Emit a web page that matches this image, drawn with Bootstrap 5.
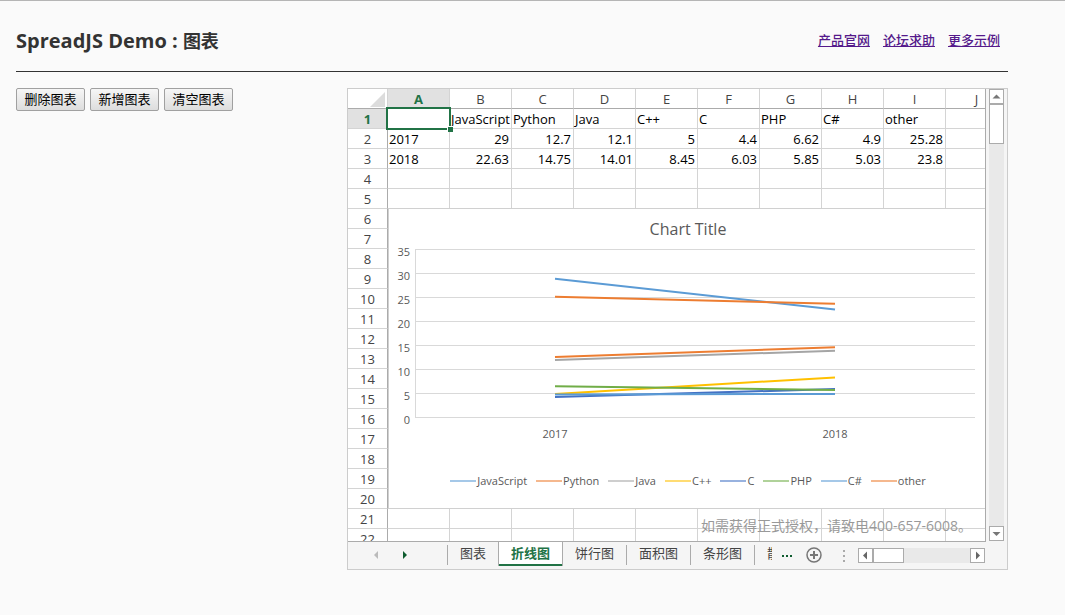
<!DOCTYPE html>
<html lang="zh-CN">
<head>
<meta charset="utf-8">
<meta name="viewport" content="width=device-width, initial-scale=1">
<title>SpreadJS Demo : 图表</title>
<link href="https://cdn.jsdelivr.net/npm/bootstrap@5.3.0/dist/css/bootstrap.min.css" rel="stylesheet">
<style>
  :root { --line: #d4d4d4; --edge: #ababab; --accent: #217346; }
  body { background: #fafafa; color: #333; border-top: 1px solid #b5b5b5; font: 13px/20px "Open Sans", "Noto Sans CJK SC", sans-serif; }
  .page { padding: 16px 57px 16px 16px; }
  .page-head { height: 55px; padding-bottom: 6px; border-bottom: 1px solid #333; }
  .page-title { font-size: 20px; line-height: 26px; font-weight: 700; }
  .page-title span { font-size: 18px; }
  .head-links { gap: 13px; padding-bottom: 2px; }
  .head-links a { color: #551a8b; font-weight: 500; }
  .actions { flex: 0 0 331px; gap: 5px; }
  .tool-btn { height: 23px; padding: 0 7px; font-size: 13px; line-height: 21px; width: 69px; white-space: nowrap; color: #000; border: 1px solid #a0a0a0; border-radius: 2px; background: linear-gradient(#f6f6f6, #ddd); }
  .spread { min-width: 0; border: 1px solid #ccc; background: #f5f5f5; }

  .sheet-view { height: 453px; min-width: 0; background: #fff; border-right: 1px solid var(--edge); border-bottom: 1px solid var(--edge); }
  .grid { table-layout: fixed; width: 660px; border-collapse: separate; border-spacing: 0; color: #000; }
  .grid th, .grid td { height: 20px; padding: 2px 2px 0 1px; line-height: 17px; white-space: nowrap; border-right: 1px solid var(--line); border-bottom: 1px solid var(--line); }
  .grid th { padding: 2px 0 0; font-weight: 400; text-align: center; color: #444; }
  .grid thead th { border-bottom-color: var(--edge); }
  .grid tbody th { border-right-color: var(--edge); }
  .grid th.picked { background: #e1e1e1; color: var(--accent); font-weight: 700; }
  .grid .corner-col { width: 40px; }
  .corner-mark { display: block; margin: 0 2px 0 auto; }
  .selection { top: -2px; left: -2px; width: 65px; height: 23px; border: 2px solid var(--accent); z-index: 1; }
  .selection::after { content: ""; position: absolute; right: -4px; bottom: -4px; width: 6px; height: 6px; background: var(--accent); border: solid #fff; border-width: 1px 0 0 1px; }

  .chart-box { left: 40px; top: 119px; width: 600px; height: 301px; background: #fff; border: 1px solid #d0d0d0; color: #595959; font-size: 11px; z-index: 2; }
  .chart-title { font-size: 16px; line-height: 20px; padding-top: 10px; }
  .chart-box text { fill: #595959; font-size: 11px; }
  .legend-row { gap: 9px; line-height: 16px; padding-top: 24px; }
  .legend-key { width: 26px; height: 2px; margin-right: 1px; opacity: .55; }
  .watermark { right: 13px; bottom: 5px; font-size: 14px; color: #999; z-index: 3; }

  .v-scroll { width: 15px; margin: 0 3px 1px; background: #e9e9e9; }
  .arrow-btn { width: 15px; height: 15px; background: #fff; border: 1px solid var(--edge); }
  .thumb { background: #fff; border: 1px solid var(--edge); }
  .v-scroll .thumb { height: 40px; }

  .tab-strip { height: 27px; color: #444; }
  .tab-nav { width: 100px; height: 20px; margin-top: 3px; padding-left: 14px; border-right: 1px solid var(--edge); }
  .sheet-tab { height: 20px; margin-top: 3px; padding: 0 12px; line-height: 17px; border-right: 1px solid var(--edge); color: #444; white-space: nowrap; flex: none; }
  .sheet-tab.open, .sheet-tab.beside { border-right: 0; }
  .sheet-tab.open { height: 25px; margin-top: -1px; line-height: 24px; background: #fff; color: var(--accent); font-weight: 700; border: solid var(--edge); border-width: 0 1px; box-shadow: inset 0 -2px var(--accent); }
  .sheet-tab.cut { width: 17px; padding-right: 0; overflow: hidden; border-right: 0; }
  .more-tabs { width: 30px; height: 27px; }
  .add-tab { width: 24px; height: 27px; }
  .grip { width: 2px; margin-right: 13px; }
  .h-scroll { width: 127px; height: 15px; margin: 6px 22px 0 0; background: #e9e9e9; }
  .h-scroll .thumb { width: 31px; height: 15px; }
</style>
</head>
<body>
<div class="page">
  <header class="page-head d-flex justify-content-between align-items-center">
    <h1 class="page-title m-0">SpreadJS Demo : <span>图表</span></h1>
    <nav class="head-links d-flex pe-2">
      <a href="#">产品官网</a>
      <a href="#">论坛求助</a>
      <a href="#">更多示例</a>
    </nav>
  </header>

  <main class="d-flex align-items-start pt-3">
    <div class="actions d-flex">
      <button type="button" class="tool-btn">删除图表</button>
      <button type="button" class="tool-btn">新增图表</button>
      <button type="button" class="tool-btn">清空图表</button>
    </div>

    <section class="spread flex-grow-1">
      <div class="d-flex">
        <div class="sheet-view position-relative overflow-hidden flex-grow-1">
          <table class="grid">
            <thead>
              <tr>
                <th class="corner-col"><svg class="corner-mark" width="15" height="15" aria-hidden="true"><path d="M15 0V15H0Z" fill="#dcdcdc"/></svg></th>
                <th class="picked">A</th><th>B</th><th>C</th><th>D</th><th>E</th><th>F</th><th>G</th><th>H</th><th>I</th><th>J</th>
              </tr>
            </thead>
            <tbody id="rows">
              <tr><th class="picked">1</th><td class="position-relative"><div class="selection position-absolute"></div></td><td>JavaScript</td><td>Python</td><td>Java</td><td>C++</td><td>C</td><td>PHP</td><td>C#</td><td>other</td><td></td></tr>
              <tr class="text-end"><th>2</th><td class="text-start">2017</td><td>29</td><td>12.7</td><td>12.1</td><td>5</td><td>4.4</td><td>6.62</td><td>4.9</td><td>25.28</td><td></td></tr>
              <tr class="text-end"><th>3</th><td class="text-start">2018</td><td>22.63</td><td>14.75</td><td>14.01</td><td>8.45</td><td>6.03</td><td>5.85</td><td>5.03</td><td>23.8</td><td></td></tr>
            </tbody>
          </table>

          <div class="chart-box position-absolute">
            <div class="chart-title text-center">Chart Title</div>
            <svg class="d-block" width="598" height="210" role="img" aria-label="Chart Title">
              <g stroke="#d9d9d9" fill="none">
                <path d="M26 10.5H586M26 34.5H586M26 58.5H586M26 82.5H586M26 106.5H586M26 130.5H586M26 154.5H586M26 178.5H586M26.500 10V179"/>
              </g>
              <g text-anchor="end">
                <text x="21" y="17">35</text><text x="21" y="41">30</text><text x="21" y="65">25</text><text x="21" y="89">20</text>
                <text x="21" y="113">15</text><text x="21" y="137">10</text><text x="21" y="161">5</text><text x="21" y="185">0</text>
              </g>
              <g text-anchor="middle"><text x="166" y="199">2017</text><text x="446" y="199">2018</text></g>
              <g id="series" stroke-width="2" fill="none"></g>
            </svg>
            <div id="legend" class="legend-row d-flex justify-content-center"></div>
          </div>
          <div class="watermark position-absolute">如需获得正式授权，请致电400-657-6008。</div>
        </div>

        <div class="v-scroll d-flex flex-column flex-shrink-0">
          <button type="button" class="arrow-btn p-0 d-flex" aria-label="向上"><svg width="13" height="13"><path d="M6.500 4.500L10.500 8.500H2.500Z" fill="#777"/></svg></button>
          <div class="thumb"></div>
          <button type="button" class="arrow-btn p-0 d-flex mt-auto" aria-label="向下"><svg width="13" height="13"><path d="M6.500 9L10.500 5H2.500Z" fill="#777"/></svg></button>
        </div>
      </div>

      <div class="tab-strip d-flex align-items-start">
        <div class="tab-nav d-flex flex-shrink-0 align-items-center">
          <button type="button" class="border-0 bg-transparent p-0 d-flex align-items-center" aria-label="上一个"><svg width="28" height="12"><path d="M16 2V10L12 6Z" fill="#bbb"/></svg></button>
          <button type="button" class="border-0 bg-transparent p-0 d-flex align-items-center" aria-label="下一个"><svg width="28" height="12"><path d="M13 2V10L17 6Z" fill="#0e5c2f"/></svg></button>
        </div>
        <a class="sheet-tab beside text-decoration-none" href="#">图表</a>
        <a class="sheet-tab open text-decoration-none" href="#">折线图</a>
        <a class="sheet-tab text-decoration-none" href="#">饼行图</a>
        <a class="sheet-tab text-decoration-none" href="#">面积图</a>
        <a class="sheet-tab text-decoration-none" href="#">条形图</a>
        <a class="sheet-tab cut text-decoration-none" href="#">散点图</a>
        <button type="button" class="more-tabs border-0 bg-transparent p-0 d-flex" aria-label="更多"><svg width="30" height="27" fill="#0e5c2f"><path d="M10 13h2v2h-2zM14 13h2v2h-2zM18 13h2v2h-2z"/></svg></button>
        <button type="button" class="add-tab border-0 bg-transparent p-0 d-flex" aria-label="新建"><svg width="24" height="27" fill="none" stroke="#777"><circle cx="12" cy="13" r="7" stroke-width="1.500"/><path d="M8 13h8M12 9v8" stroke-width="2"/></svg></button>
        <div class="d-flex align-items-start ms-auto flex-shrink-0">
          <svg class="grip" width="2" height="27" fill="#aaa" aria-hidden="true"><path d="M0 8h2v2H0zM0 13h2v2H0zM0 18h2v2H0z"/></svg>
          <div class="h-scroll d-flex">
            <button type="button" class="arrow-btn p-0 d-flex" aria-label="向左"><svg width="13" height="13"><path d="M4 6.500L8 2.500V10.500Z" fill="#666"/></svg></button>
            <div class="thumb"></div>
            <button type="button" class="arrow-btn p-0 d-flex ms-auto" aria-label="向右"><svg width="13" height="13"><path d="M9 6.500L5 2.500V10.500Z" fill="#666"/></svg></button>
          </div>
        </div>
      </div>
    </section>
  </main>
</div>

<script src="https://cdn.jsdelivr.net/npm/bootstrap@5.3.0/dist/js/bootstrap.bundle.min.js"></script>
<script>
  // Empty rows below the data
  const rows = document.getElementById('rows');
  for (let n = 4; n <= 22; n++) {
    rows.insertAdjacentHTML('beforeend', `<tr><th>${n}</th>${'<td></td>'.repeat(10)}</tr>`);
  }
  // Chart series: name, 2017, 2018, colour
  const data = [
    ['JavaScript', 29, 22.63, '#5b9bd5'], ['Python', 12.7, 14.75, '#ed7d31'],
    ['Java', 12.1, 14.01, '#a5a5a5'], ['C++', 5, 8.45, '#ffc000'],
    ['C', 4.4, 6.03, '#4472c4'], ['PHP', 6.62, 5.85, '#70ad47'],
    ['C#', 4.9, 5.03, '#5b9bd5'], ['other', 25.28, 23.8, '#ed7d31']
  ];
  const y = v => (179 - v * 168 / 35).toFixed(1);
  document.getElementById('series').innerHTML = data.map(([, a, b, c]) => `<path d="M166 ${y(a)}L446 ${y(b)}" stroke="${c}"/>`).join('');
  document.getElementById('legend').innerHTML = data.map(([name, , , c]) => `<span class="d-flex align-items-center"><span class="legend-key" style="background:${c}"></span>${name}</span>`).join('');
</script>
</body>
</html>
